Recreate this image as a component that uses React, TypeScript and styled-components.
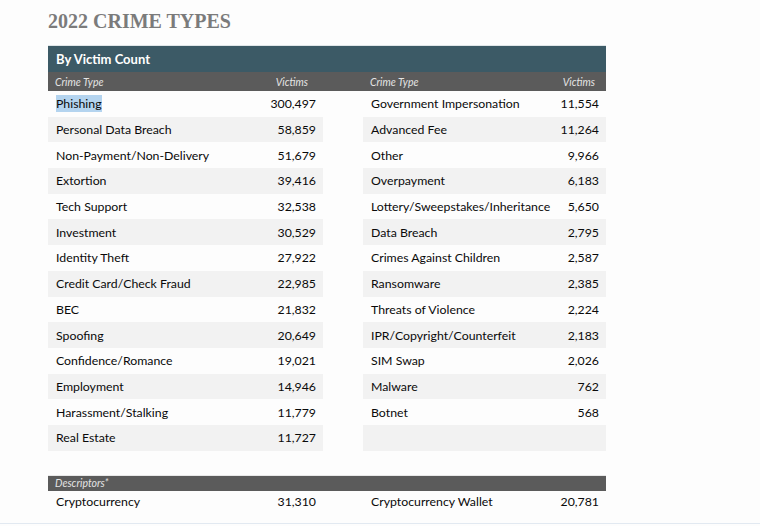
import React from "react";
import styled, { createGlobalStyle } from "styled-components";

const Global = createGlobalStyle`
  html, body { margin: 0; padding: 0; background: #fdfdfd; }
  body { width: 760px; height: 526px; overflow: hidden; font-family: Lato, "Open Sans", sans-serif; }
`;

const Page = styled.div`
  position: relative;
  width: 760px;
  height: 526px;
  box-sizing: border-box;
  padding: 7px 0 0 48px;
`;

const Title = styled.h1`
  margin: 0;
  font-family: "Liberation Serif", "DejaVu Serif", serif;
  font-weight: bold;
  font-size: 20px;
  line-height: 28px;
  color: #7b7b7b;
`;

const Table = styled.div`
  margin-top: 10px;
  width: 558px;
`;

const Banner = styled.div`
  height: 27px;
  background: #3c5a66;
  color: #fff;
  font-weight: bold;
  font-size: 13px;
  display: flex;
  align-items: center;
  padding-left: 8px;
  border-top: 1px solid #e0e6e8;
  box-sizing: border-box;
`;

const Grid = styled.div`
  display: grid;
  grid-template-columns: 222px 53px 40px 186px 57px;
`;

const HeadCell = styled.div<{ $right?: boolean; $pr?: number }>`
  height: 19px;
  background: #5b5b5b;
  color: #e4e4e4;
  font-style: italic;
  font-size: 10.5px;
  display: flex;
  align-items: center;
  justify-content: ${(p) => (p.$right ? "flex-end" : "flex-start")};
  padding: 0 ${(p) => p.$pr ?? 0}px 0 ${(p) => (p.$right ? 0 : 7)}px;
  box-sizing: border-box;
`;

const Cell = styled.div<{ $stripe?: boolean; $right?: boolean; $gap?: boolean }>`
  height: 25.7px;
  background: ${(p) => (p.$stripe && !p.$gap ? "#f2f2f2" : "transparent")};
  color: #0a0a0a;
  font-size: 12.3px;
  display: flex;
  align-items: center;
  justify-content: ${(p) => (p.$right ? "flex-end" : "flex-start")};
  padding: ${(p) => (p.$right ? "0 7px 0 0" : "0 0 0 8px")};
  box-sizing: border-box;
  white-space: nowrap;
`;

const Selected = styled.span`
  background: #b4d4ef;
  padding: 1px 0;
`;

const Spacer = styled.div`
  height: 24px;
`;

const DescBar = styled.div`
  height: 16px;
  background: #5b5b5b;
  color: #e4e4e4;
  font-style: italic;
  font-size: 10.5px;
  display: flex;
  align-items: center;
  padding-left: 7px;
  border-top: 1px solid #e8e8e8;
  box-sizing: border-box;
`;

const CryptoCell = styled(Cell)`
  height: 21px;
`;

const BottomLine = styled.div`
  position: absolute;
  left: 0;
  right: 0;
  bottom: 2px;
  height: 1px;
  background: #e2e9f1;
`;

const left: [string, string][] = [
  ["Phishing", "300,497"],
  ["Personal Data Breach", "58,859"],
  ["Non-Payment/Non-Delivery", "51,679"],
  ["Extortion", "39,416"],
  ["Tech Support", "32,538"],
  ["Investment", "30,529"],
  ["Identity Theft", "27,922"],
  ["Credit Card/Check Fraud", "22,985"],
  ["BEC", "21,832"],
  ["Spoofing", "20,649"],
  ["Confidence/Romance", "19,021"],
  ["Employment", "14,946"],
  ["Harassment/Stalking", "11,779"],
  ["Real Estate", "11,727"],
];

const right: [string, string][] = [
  ["Government Impersonation", "11,554"],
  ["Advanced Fee", "11,264"],
  ["Other", "9,966"],
  ["Overpayment", "6,183"],
  ["Lottery/Sweepstakes/Inheritance", "5,650"],
  ["Data Breach", "2,795"],
  ["Crimes Against Children", "2,587"],
  ["Ransomware", "2,385"],
  ["Threats of Violence", "2,224"],
  ["IPR/Copyright/Counterfeit", "2,183"],
  ["SIM Swap", "2,026"],
  ["Malware", "762"],
  ["Botnet", "568"],
  ["", ""],
];

export default function App() {
  return (
    <>
      <Global />
      <Page>
        <Title>2022 CRIME TYPES</Title>
        <Table>
          <Banner>By Victim Count</Banner>
          <Grid>
            <HeadCell>Crime Type</HeadCell>
            <HeadCell $right $pr={15}>Victims</HeadCell>
            <HeadCell />
            <HeadCell>Crime Type</HeadCell>
            <HeadCell $right $pr={11}>Victims</HeadCell>
            {left.map((l, i) => {
              const r = right[i];
              const s = i % 2 === 1;
              return (
                <React.Fragment key={i}>
                  <Cell $stripe={s}>{i === 0 ? <Selected>{l[0]}</Selected> : l[0]}</Cell>
                  <Cell $stripe={s} $right>{l[1]}</Cell>
                  <Cell $gap />
                  <Cell $stripe={s}>{r[0]}</Cell>
                  <Cell $stripe={s} $right>{r[1]}</Cell>
                </React.Fragment>
              );
            })}
          </Grid>
          <Spacer />
          <DescBar>Descriptors*</DescBar>
          <Grid>
            <CryptoCell>Cryptocurrency</CryptoCell>
            <CryptoCell $right>31,310</CryptoCell>
            <CryptoCell $gap />
            <CryptoCell>Cryptocurrency Wallet</CryptoCell>
            <CryptoCell $right>20,781</CryptoCell>
          </Grid>
        </Table>
        <BottomLine />
      </Page>
    </>
  );
}
